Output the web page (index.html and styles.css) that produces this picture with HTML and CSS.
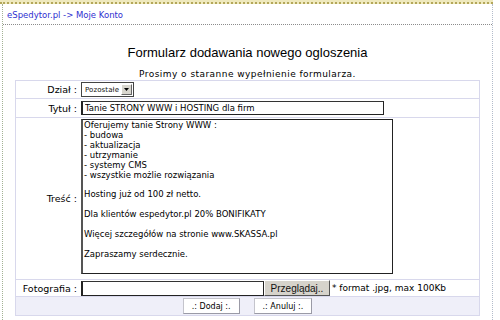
FILE: index.html
```html
<!DOCTYPE html>
<html>
<head>
    <meta charset="utf-8">
    <link rel="stylesheet" href="styles.css">
</head>
<body>

<div class="top-band"></div>

<div class="frame">
    <div class="crumbs">eSpedytor.pl -&gt; Moje Konto</div>

    <h1>Formularz dodawania nowego ogloszenia</h1>
    <p class="hint">Prosimy o staranne wypełnienie formularza.</p>

    <form class="ad-form">
    <table class="form-table">
        <tr class="row-dzial">
            <td class="label">Dział :</td>
            <td class="field">
                <span class="select">
                    <span class="select-value">Pozostałe</span>
                    <span class="select-arrow">
                        <svg width="5" height="3" viewBox="0 0 5 3"><path d="M0 0h5L2.5 3z" fill="#000"/></svg>
                    </span>
                </span>
            </td>
        </tr>
        <tr class="row-tytul">
            <td class="label">Tytuł :</td>
            <td class="field">
                <input class="text-input title-input" type="text" value="Tanie STRONY WWW i HOSTING dla firm">
            </td>
        </tr>
        <tr class="row-tresc">
            <td class="label">Treść :</td>
            <td class="field">
<textarea class="content-input">Oferujemy tanie Strony WWW :
- budowa
- aktualizacja
- utrzymanie
- systemy CMS
- wszystkie możlie rozwiązania

Hosting już od 100 zł netto.

Dla klientów espedytor.pl 20% BONIFIKATY

Więcej szczegółów na stronie www.SKASSA.pl

Zapraszamy serdecznie.</textarea>
            </td>
        </tr>
        <tr class="row-foto">
            <td class="label">Fotografia :</td>
            <td class="field">
                <div class="file-line">
                    <input class="text-input file-input" type="text" value="">
                    <button type="button" class="browse-btn">Przeglądaj..</button>
                    <span class="file-note">* format .jpg, max 100Kb</span>
                </div>
            </td>
        </tr>
        <tr class="row-actions">
            <td colspan="2">
                <div class="actions">
                    <button type="submit" class="action-btn">.: Dodaj :.</button>
                    <button type="reset" class="action-btn">.: Anuluj :.</button>
                </div>
            </td>
        </tr>
    </table>
    </form>
</div>

</body>
</html>
```

FILE: styles.css
```css
body {
    margin: 0;
    padding: 0;
    background: #fff;
    color: #000;
    font-family: "DejaVu Sans", Verdana, sans-serif;
}
.top-band {
    width: 493px;
    height: 2px;
    background: #efe9bd;
    border-bottom: 2px dotted #b3a75a;
}
.frame {
    margin-left: 2px;
    width: 489px;
    border-left: 1px dotted #a3b294;
    border-right: 1px dotted #b3bccb;
    padding-bottom: 8px;
}
.crumbs {
    padding: 6px 0 3px 4px;
    font-size: 8.5px;
    line-height: 11px;
    color: #2f2fd0;
    border-bottom: 1px dotted #8c8c8c;
}
h1 {
    margin: 20px 0 0;
    font-family: "Liberation Sans", Arial, sans-serif;
    font-size: 13px;
    font-weight: normal;
    line-height: 16px;
    text-align: center;
}
.hint {
    margin: 8px 0 0;
    font-size: 9px;
    line-height: 11px;
    letter-spacing: 0.45px;
    text-align: center;
}
.ad-form {
    margin: 0;
}
.form-table {
    width: 465px;
    margin: 0 auto;
    border-collapse: collapse;
    border: 1px solid #d8d8ec;
}
.form-table td {
    padding: 0;
    border-bottom: 1px solid #d8d8ec;
}
.label {
    width: 61px;
    padding-right: 3px !important;
    text-align: right;
    font-size: 9.5px;
    white-space: nowrap;
    vertical-align: middle;
}
.field {
    padding-left: 1px !important;
    vertical-align: middle;
}
.row-dzial td {
    height: 17px;
}
.row-tytul td {
    height: 18px;
}
.row-tresc td {
    height: 160px;
}
.row-tresc .field {
    vertical-align: top;
    padding-top: 1px !important;
}
.row-foto td {
    height: 15px;
}
.row-actions td {
    height: 18px;
    background: #efeff9;
}

.select {
    display: flex;
    align-items: center;
    width: 53px;
    height: 15px;
    box-sizing: border-box;
    border: 1px solid #444;
    background: #fff;
}
.select-value {
    flex: 1;
    min-width: 0;
    overflow: hidden;
    white-space: nowrap;
    padding-left: 3px;
    font-size: 7px;
    letter-spacing: 0.1px;
    color: #111;
}
.select-arrow {
    display: flex;
    align-items: center;
    justify-content: center;
    flex: none;
    width: 11px;
    height: 11px;
    margin-right: 1px;
    background: #d8d6ce;
    border: 1px solid #fff;
    border-right-color: #666;
    border-bottom-color: #666;
    box-sizing: border-box;
}

.text-input {
    display: block;
    box-sizing: border-box;
    margin: 0;
    padding: 0 2px;
    border: 1px solid #222;
    border-left-width: 2px;
    border-top-color: #333;
    background: #fff;
    font-family: "DejaVu Sans", Verdana, sans-serif;
    font-size: 8.5px;
    color: #000;
    outline: none;
}
.title-input {
    width: 303px;
    height: 14px;
}
.content-input {
    display: block;
    box-sizing: border-box;
    width: 312px;
    height: 155px;
    margin: 0;
    padding: 1px 1px;
    border: 1px solid #222;
    border-left: 2px solid #555;
    font-family: "DejaVu Sans", Verdana, sans-serif;
    font-size: 8.5px;
    line-height: 9.9px;
    color: #000;
    resize: none;
    overflow: hidden;
    outline: none;
}

.file-line {
    display: flex;
    align-items: center;
}
.file-input {
    width: 183px;
    height: 15px;
}
.browse-btn {
    width: 66px;
    height: 16px;
    margin: 0;
    padding: 0;
    background: #d6d3cb;
    border: 1px solid #fff;
    border-right-color: #555;
    border-bottom-color: #555;
    font-family: "Liberation Sans", Arial, sans-serif;
    font-size: 10px;
    color: #111;
}
.file-note {
    margin-left: 2px;
    font-size: 9px;
}

.actions {
    display: flex;
    justify-content: center;
    gap: 14px;
}
.action-btn {
    height: 16px;
    padding: 0 8px;
    margin: 0;
    background: #fff;
    border: 1px solid #c4c4cc;
    border-right-color: #9a9aa6;
    border-bottom-color: #9a9aa6;
    font-family: "DejaVu Sans", Verdana, sans-serif;
    font-size: 8px;
    color: #000;
}
```
